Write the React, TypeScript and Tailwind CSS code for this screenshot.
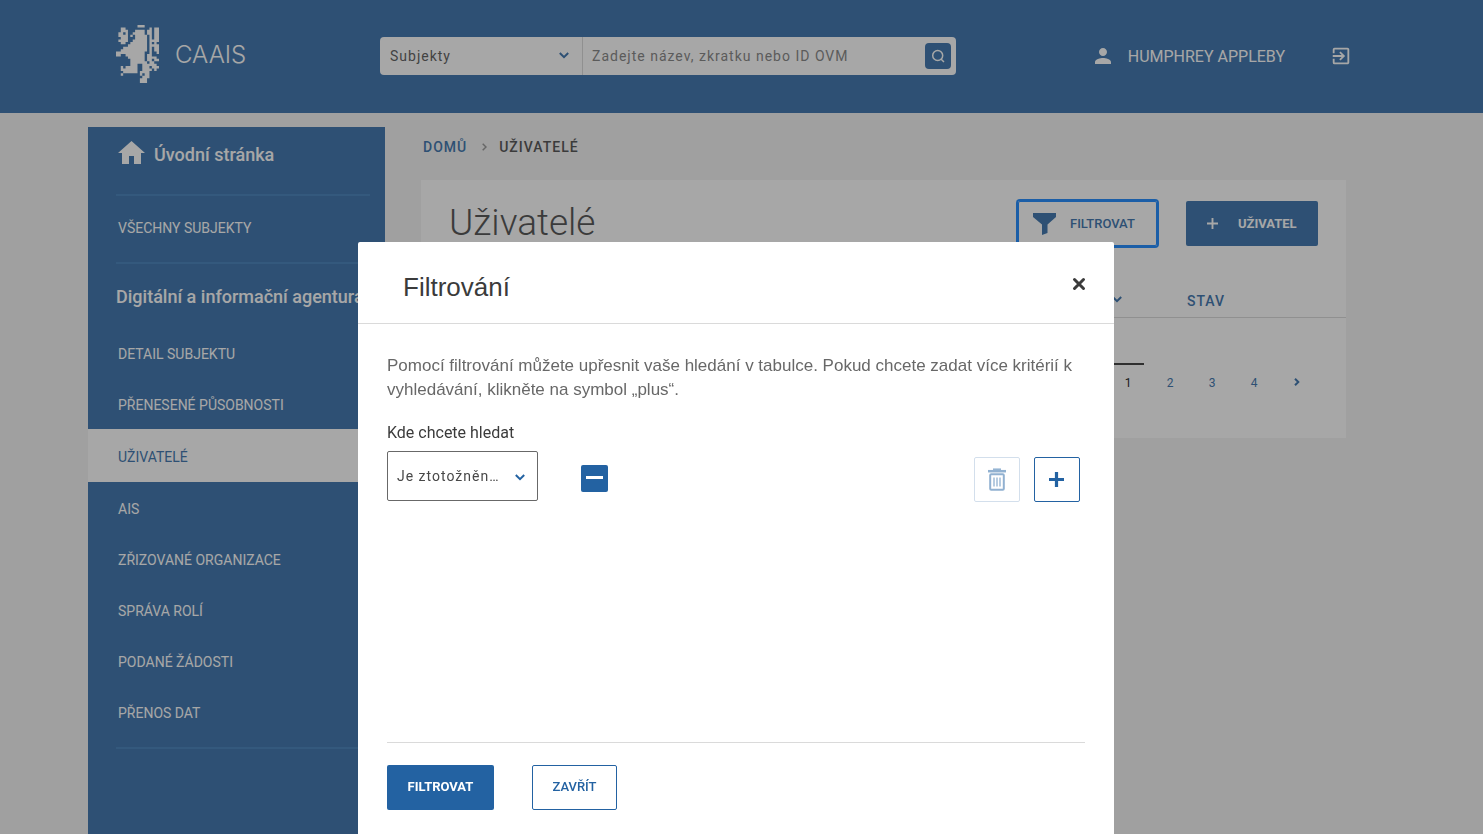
import React from 'react';
import { MdExitToApp, MdPerson } from 'react-icons/md';

const LION = [
  '.........###......',
  '..##..........#.##',
  '..###...####.##.##',
  '.##.#..#####.##.##',
  '.####.#.#####.#.##',
  '..###...#####.#.##',
  '.####..######.####',
  '..##..#######.#.#.',
  '.....########.####',
  '...##########.#.##',
  '..###########.#.##',
  '############..#..#',
  '##..########.##...',
  '.....#######.####.',
  '......######.##.##',
  '......#######.##..',
  '......###..######.',
  '..#.#####..###.###',
  '..#######..####.#.',
  '...######.####....',
  '..#.......#.##....',
  '...........###....',
  '..........###.....',
  '..........###.....',
];

// one closed unit square per filled cell
const lionPath = LION.map((row, y) =>
  row
    .split('')
    .map((cell, x) => (cell === '#' ? `M${x} ${y}h1v1h-1z` : ''))
    .join('')
).join('');

interface NavItem {
  label: string;
  active?: boolean;
}

const navItems: NavItem[] = [
  { label: 'DETAIL SUBJEKTU' },
  { label: 'PŘENESENÉ PŮSOBNOSTI' },
  { label: 'UŽIVATELÉ', active: true },
  { label: 'AIS' },
  { label: 'ZŘIZOVANÉ ORGANIZACE' },
  { label: 'SPRÁVA ROLÍ' },
  { label: 'PODANÉ ŽÁDOSTI' },
  { label: 'PŘENOS DAT' },
];

const LionLogo: React.FC = () => (
  <svg width="43" height="58" viewBox="0 0 18 24" preserveAspectRatio="none" fill="currentColor">
    <path d={lionPath} />
  </svg>
);

const Chevron: React.FC<{ className?: string }> = ({ className }) => (
  <svg width="10" height="7" viewBox="0 0 10 7" fill="none" stroke="currentColor" strokeWidth="2" className={className}>
    <path d="M.8 1 5 5.2 9.2 1" />
  </svg>
);

const Plus: React.FC<{ size: number; stroke: number }> = ({ size, stroke }) => (
  <svg width={size} height={size} viewBox="0 0 14 14" stroke="currentColor" strokeWidth={stroke}>
    <path d="M7 0v14M0 7h14" />
  </svg>
);

const Header: React.FC = () => (
  <header className="h-[113px] bg-[#2362a2] text-white flex items-start pl-[116px] pr-[131px]">
    <a href="#" className="flex items-center pt-[25px] w-[264px] shrink-0">
      <LionLogo />
      <span className="ml-4 pt-[2px] font-['Inter'] font-light text-2xl">CAAIS</span>
    </a>
    <form className="mt-[37px] flex h-[38px] w-[576px] bg-white rounded-sm text-sm tracking-[1px]">
      <div className="relative w-[203px] border-r border-[#d5d5d5]">
        <select aria-label="Subjekty" className="appearance-none w-full h-full px-[10px] text-[#484848] tracking-[1px]">
          <option>Subjekty</option>
        </select>
        <Chevron className="absolute right-[13px] top-[15px] text-[#2362a2] pointer-events-none" />
      </div>
      <input
        type="search"
        aria-label="Zadejte název, zkratku nebo ID OVM"
        placeholder="Zadejte název, zkratku nebo ID OVM"
        className="flex-1 px-[9px] placeholder:text-[#757575] outline-none"
      />
      <button type="button" aria-label="Hledat" className="m-[6px] mr-[5px] w-[26px] h-[26px] rounded-sm bg-[#2362a2] flex items-center justify-center">
        <svg width="14" height="14" viewBox="0 0 14 14" fill="none" stroke="currentColor" strokeWidth="1.5">
          <circle cx="6.7" cy="6.5" r="5" />
          <path d="m10 10 3 3" />
        </svg>
      </button>
    </form>
    <div className="mt-[43px] ml-auto flex items-center">
      <MdPerson size={24} />
      <a href="#" className="ml-[13px] pt-[2px]">HUMPHREY APPLEBY</a>
      <button type="button" aria-label="Odhlásit" className="ml-[45px]">
        <MdExitToApp size={22} />
      </button>
    </div>
  </header>
);

const Sidebar: React.FC = () => (
  <nav className="w-[297px] shrink-0 bg-[#2362a2] text-white text-sm pb-8">
    <a href="#" className="flex items-center h-[67px] pl-[30px] pb-3 text-lg font-medium">
      <svg width="27" height="23" viewBox="0 0 27 23" fill="currentColor" className="mb-1">
        <path d="M13.5 0 27 12h-4v11h-7v-8h-5v8H4V12H0z" />
      </svg>
      <span className="ml-[9px]">Úvodní stránka</span>
    </a>
    <hr className="ml-7 mr-[15px] border-t-2 border-[#2e72b2]" />
    <a href="#" className="flex items-center h-[66px] pl-[30px] pb-[2px]">VŠECHNY SUBJEKTY</a>
    <hr className="ml-7 mr-[15px] border-t-2 border-[#2e72b2]" />
    <a href="#" className="flex items-center h-[63px] pl-7 pt-[2px] text-lg font-medium whitespace-nowrap">
      Digitální a informační agentura
    </a>
    <ul>
      {navItems.map((item) => (
        <li key={item.label}>
          <a
            href="#"
            className={`flex items-center pl-[30px] pt-[2px] ${
              item.active ? 'h-[53px] bg-white text-[#2362a2]' : 'h-[51px]'
            }`}
          >
            {item.label}
          </a>
        </li>
      ))}
    </ul>
    <hr className="mt-[10px] ml-7 mr-[15px] border-t-2 border-[#2e72b2]" />
  </nav>
);

const UsersPanel: React.FC = () => (
  <section className="mt-[23px] bg-white h-[258px]">
    <div className="flex items-start pt-[21px] pl-7 pr-7">
      <h1 className="text-[37px] leading-[44px] font-light text-[#3b3b3b]">Uživatelé</h1>
      <button type="button" className="ml-auto h-[45px] w-[139px] pl-[14px] flex items-center rounded-xs border border-[#007bff] ring-2 ring-[#007bff] text-[#2362a2] text-[13px] font-medium">
        <svg width="23" height="22" viewBox="0 0 23 22" fill="currentColor">
          <path d="M0 0h23v4l-8.500 7.500v8.500L9 22V11.500L0 4z" />
        </svg>
        <span className="ml-[14px]">FILTROVAT</span>
      </button>
      <button type="button" className="ml-[29px] h-[45px] w-[132px] pl-[21px] flex items-center rounded-xs bg-[#2362a2] text-white text-[13px] font-bold">
        <Plus size={11} stroke={2.4} />
        <span className="ml-5">UŽIVATEL</span>
      </button>
    </div>
    <table className="mt-[38px] w-full text-sm text-[#2362a2] border-b border-[#d5d5d5]">
      <thead>
        <tr className="h-[33px]">
          <th className="pb-1 text-right">
            <Chevron className="inline" />
          </th>
          <th className="w-[224px] pl-[65px] pt-[2px] text-left font-medium tracking-[1px]">STAV</th>
        </tr>
      </thead>
    </table>
    <nav className="mt-[45px] mr-7 flex justify-end text-xs text-[#2362a2]">
      <a href="#" aria-current="page" className="w-8 mr-[5px] pt-[10px] text-center border-t-2 border-[#262626] text-black">1</a>
      <a href="#" className="w-[42px] pt-3 text-center">2</a>
      <a href="#" className="w-[42px] pt-3 text-center">3</a>
      <a href="#" className="w-[42px] pt-3 text-center">4</a>
      <a href="#" aria-label="Další" className="w-[43px] pt-[10px] flex items-center justify-center">
        <svg width="6" height="8" viewBox="0 0 6 8" fill="none" stroke="currentColor" strokeWidth="2">
          <path d="m1 .800 3.300 3.200L1 7.200" />
        </svg>
      </a>
    </nav>
  </section>
);

const FilterModal: React.FC = () => (
  <div className="fixed inset-0 bg-[#3c3c3c]/45 flex justify-center pt-[242px] pr-[11px]">
    <div role="dialog" aria-labelledby="filter-title" className="w-full max-w-[756px] bg-white rounded-t-xs flex flex-col">
      <div className="h-[82px] shrink-0 pt-[10px] pl-[45px] pr-7 flex items-center justify-between border-b border-[#dadada]">
        <h2 id="filter-title" className="font-['Liberation_Sans'] text-[26px] text-[#3b3b3b]">Filtrování</h2>
        <button type="button" aria-label="Zavřít okno" className="mb-2 text-[#3b3b3b]">
          <svg width="14" height="14" viewBox="0 0 14 14" stroke="currentColor" strokeWidth="3" strokeLinecap="round">
            <path d="m2.500 2.500 9 9M11.500 2.500l-9 9" />
          </svg>
        </button>
      </div>
      <div className="px-[29px] pt-[30px] flex flex-col flex-1">
        <p className="font-['Liberation_Sans'] text-[17px] leading-6 text-[#686868]">
          Pomocí filtrování můžete upřesnit vaše hledání v tabulce. Pokud chcete zadat více kritérií k vyhledávání, klikněte na symbol „plus“.
        </p>
        <label htmlFor="where" className="mt-[19px] text-base leading-6 text-[#3b3b3b]">Kde chcete hledat</label>
        <div className="mt-[5px] flex items-center pr-[5px]">
          <div className="relative w-[151px] h-[50px]">
            <select id="where" className="appearance-none w-full h-full pl-[9px] border border-[#686868] rounded-xs text-sm tracking-[1px] text-[#484848]">
              <option>Je ztotožněn…</option>
            </select>
            <Chevron className="absolute right-[13px] top-[23px] text-[#2362a2] pointer-events-none" />
          </div>
          <div className="relative ml-[43px] mt-[5px] w-[27px] h-[27px]">
            <input type="checkbox" aria-label="Je ztotožněn…" className="appearance-none block w-full h-full rounded-xs bg-[#2362a2]" />
            <span className="absolute left-[5px] right-[5px] top-[11px] h-[3px] bg-white pointer-events-none" />
          </div>
          <button type="button" disabled aria-label="Odebrat" className="ml-auto mt-[7px] w-[46px] h-[45px] flex items-center justify-center rounded-xs border border-[#d3dfec] text-[#91b1d1]">
            <svg width="18" height="23" viewBox="0 0 18 23" fill="none" stroke="currentColor">
              <path strokeWidth="2.500" d="M0 3.200h18" />
              <path strokeWidth="1.500" d="M5 1.200h8" />
              <rect x="2.200" y="6.200" width="13.600" height="15.600" rx="1" strokeWidth="2" />
              <path strokeWidth="1.300" d="M6 9.500v9M9 9.500v9M12 9.500v9" />
            </svg>
          </button>
          <button type="button" aria-label="Přidat" className="ml-[14px] mt-[7px] w-[46px] h-[45px] pr-[2px] flex items-center justify-center rounded-xs border border-[#2362a2] text-[#2362a2]">
            <Plus size={15} stroke={3} />
          </button>
        </div>
        <div className="mt-auto pt-[22px] pb-6 flex gap-[38px] border-t border-[#dadada] text-[13px]">
          <button type="button" className="w-[107px] h-[45px] pb-[2px] rounded-xs bg-[#2362a2] text-white font-bold">FILTROVAT</button>
          <button type="button" className="w-[85px] h-[45px] pb-[2px] rounded-xs border border-[#2362a2] text-[#2362a2] font-medium">ZAVŘÍT</button>
        </div>
      </div>
    </div>
  </div>
);

export default function App() {
  return (
    <div className="min-h-screen flex flex-col bg-[#f2f2f2] font-['Roboto',sans-serif]">
      <Header />
      <div className="flex flex-1 mt-[14px] ml-[88px] mr-[137px]">
        <Sidebar />
        <main className="flex-1 ml-9">
          <div className="pl-[2px] pt-[10px] flex items-center text-sm font-medium tracking-[1px]">
            <a href="#" className="text-[#2362a2]">DOMŮ</a>
            <svg width="5" height="8" viewBox="0 0 5 8" fill="none" stroke="#8a8a8a" strokeWidth="1.500" className="ml-[15px] mr-3">
              <path d="m.7.700 3.300 3.300L.7 7.300" />
            </svg>
            <span className="text-[#3b3b3b]">UŽIVATELÉ</span>
          </div>
          <UsersPanel />
        </main>
      </div>
      <FilterModal />
    </div>
  );
}
